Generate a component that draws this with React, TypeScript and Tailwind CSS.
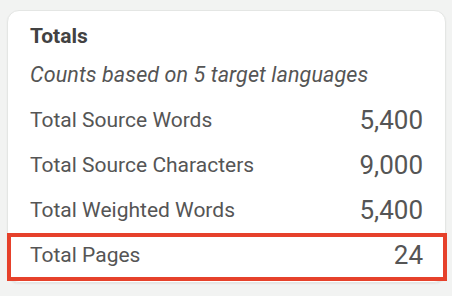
const rows = [
  { label: "Total Source Words", value: "5,400" },
  { label: "Total Source Characters", value: "9,000" },
  { label: "Total Weighted Words", value: "5,400" },
  { label: "Total Pages", value: "24", marked: true },
];

export default function App() {
  return (
    <div className="min-h-screen bg-[#f2f3f2] pt-[10px] pl-[7px] font-['Roboto',Arial,sans-serif]">
      <div className="w-[439px] h-[273px] rounded-[12px] border border-[#e4e6e4] bg-white shadow-[0_1px_2px_rgba(0,0,0,0.06)] pt-[13px]">
        <h2 className="px-[22px] h-[24px] leading-[24px] text-[21px] font-bold text-[#424242]">Totals</h2>
        <p className="mt-[15px] px-[22px] h-[24px] leading-[24px] text-[21.5px] tracking-[0.1px] italic text-[#555]">
          Counts based on 5 target languages
        </p>
        <div className="mt-[11px]">
          {rows.map((row) => (
            <div
              key={row.label}
              className="relative flex h-[45px] items-center justify-between pl-[22px] pr-[22px] text-[#555]"
            >
              <span className="text-[21px]">{row.label}</span>
              <span className="text-[26px]">{row.value}</span>
              {row.marked && (
                <div className="absolute -left-[1px] -right-[2px] top-0 -bottom-[3px] border-[4.5px] border-[#e6412b]" />
              )}
            </div>
          ))}
        </div>
      </div>
    </div>
  );
}
